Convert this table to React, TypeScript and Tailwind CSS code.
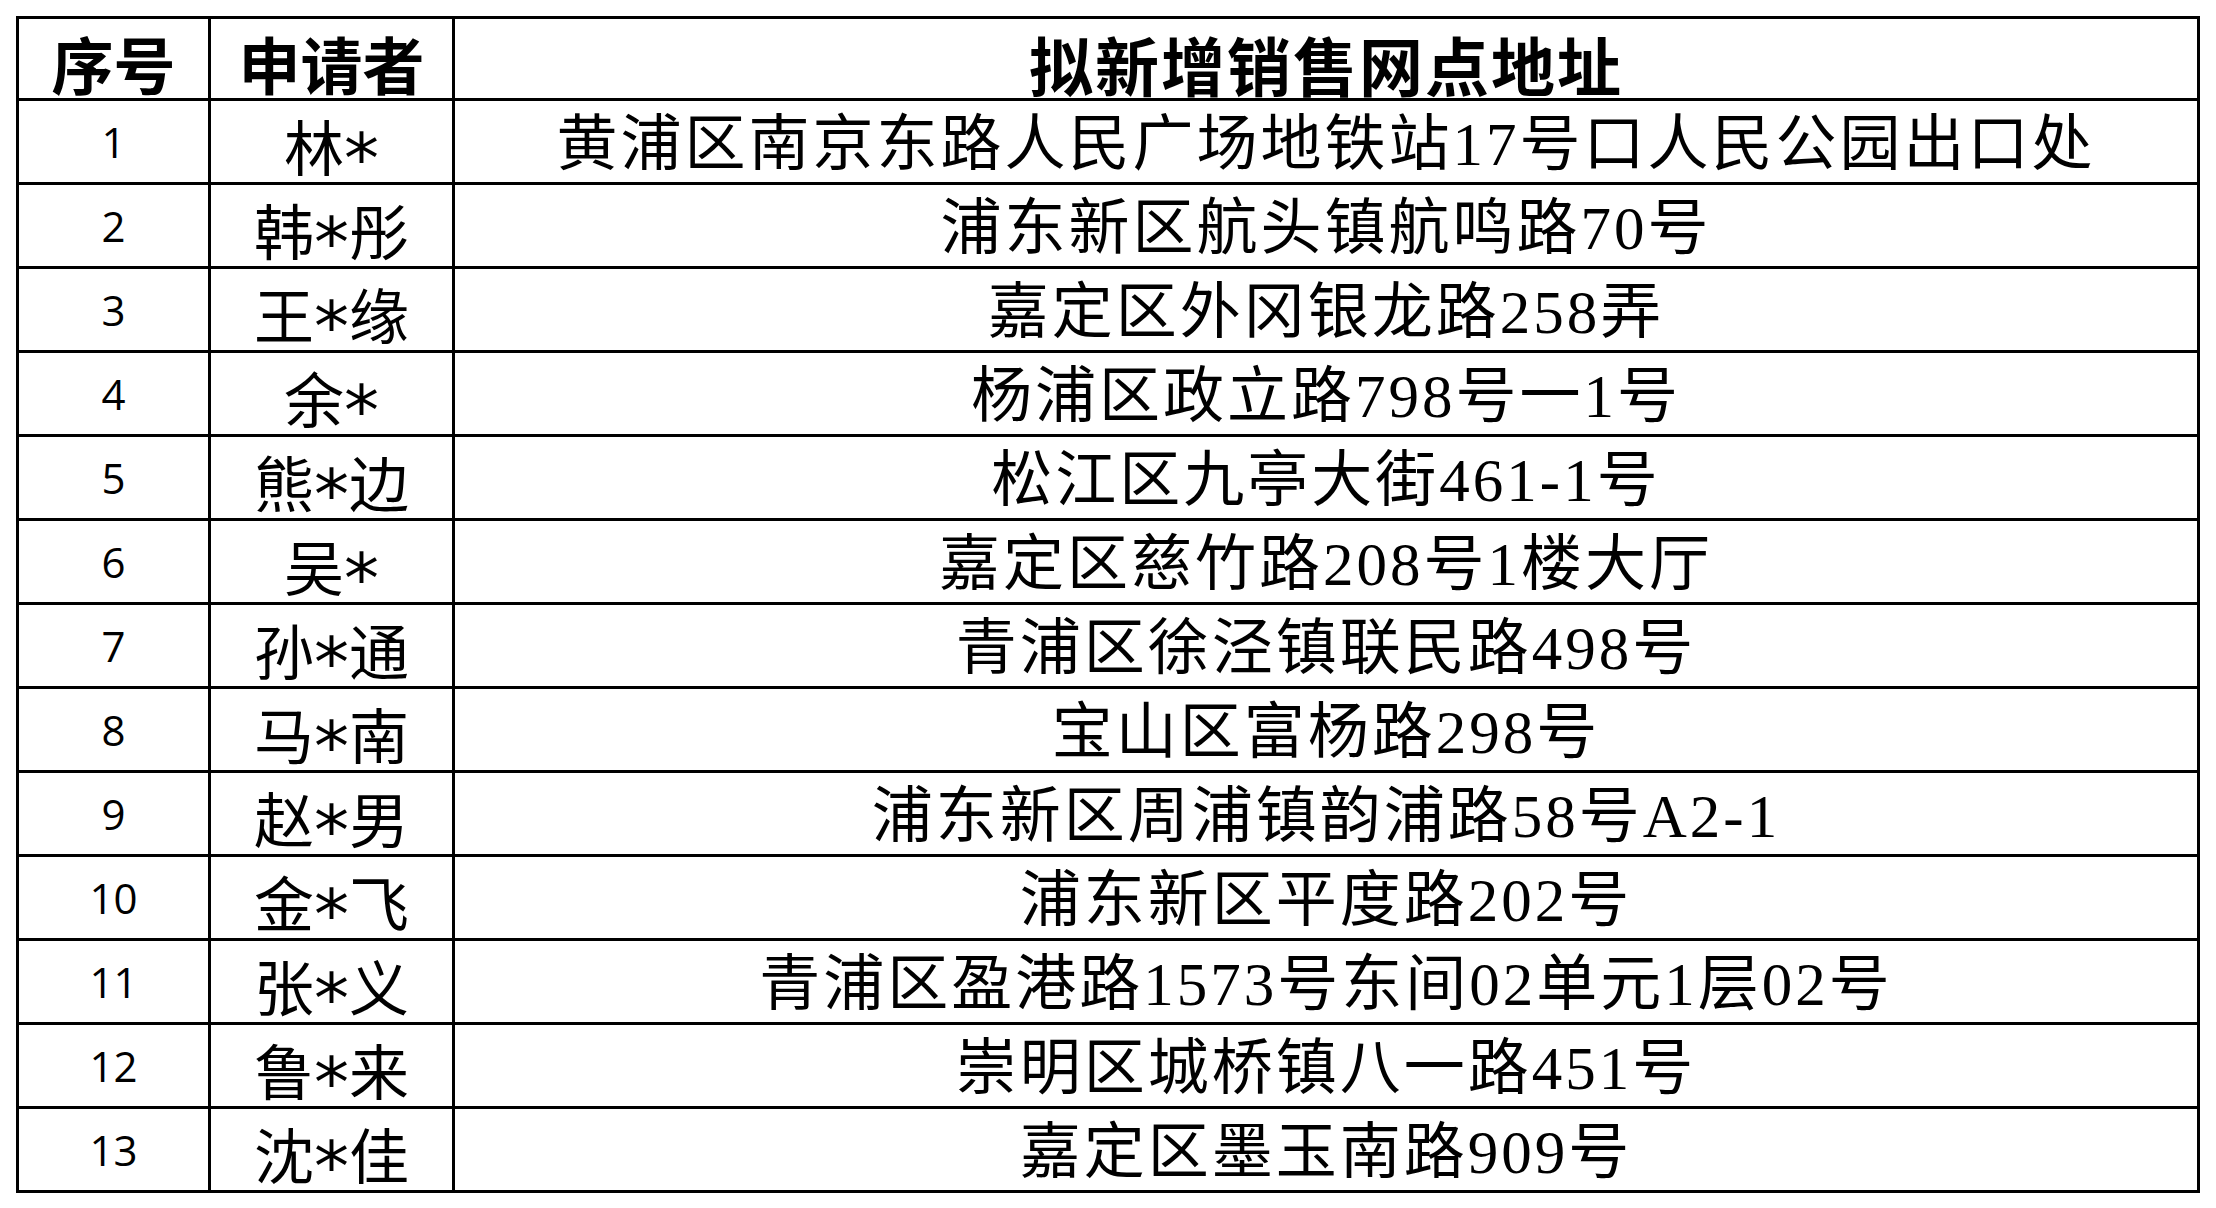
import React from "react";

const rows: [string, string, string][] = [
  ["1", "林*", "黄浦区南京东路人民广场地铁站17号口人民公园出口处"],
  ["2", "韩*彤", "浦东新区航头镇航鸣路70号"],
  ["3", "王*缘", "嘉定区外冈银龙路258弄"],
  ["4", "余*", "杨浦区政立路798号一1号"],
  ["5", "熊*边", "松江区九亭大街461-1号"],
  ["6", "吴*", "嘉定区慈竹路208号1楼大厅"],
  ["7", "孙*通", "青浦区徐泾镇联民路498号"],
  ["8", "马*南", "宝山区富杨路298号"],
  ["9", "赵*男", "浦东新区周浦镇韵浦路58号A2-1"],
  ["10", "金*飞", "浦东新区平度路202号"],
  ["11", "张*义", "青浦区盈港路1573号东间02单元1层02号"],
  ["12", "鲁*来", "崇明区城桥镇八一路451号"],
  ["13", "沈*佳", "嘉定区墨玉南路909号"],
];

function Name({ text }: { text: string }) {
  const [a, b] = text.split("*");
  return (
    <span>
      {a}
      <span className="inline-block h-[56px] translate-y-[12px] font-['DejaVu_Sans',sans-serif] text-[70px] leading-[56px]">
        *
      </span>
      {b}
    </span>
  );
}

export default function App() {
  return (
    <div className="w-[2216px] h-[1208px] bg-white pl-[16px] pt-[16px]">
      <table className="border-collapse text-black" style={{ width: 2184 }}>
        <colgroup>
          <col className="w-[192px]" />
          <col className="w-[244px]" />
          <col />
        </colgroup>
        <thead>
          <tr className="h-[82px]">
            <th className="border-[3px] border-black p-0 pt-[8px] text-[62px] font-bold leading-none font-['Noto_Sans_CJK_SC',sans-serif]">
              序号
            </th>
            <th className="border-[3px] border-black p-0 pt-[8px] text-[62px] font-bold leading-none font-['Noto_Sans_CJK_SC',sans-serif]">
              申请者
            </th>
            <th className="border-[3px] border-black p-0 pt-[8px] text-[64px] font-bold leading-none tracking-[2px] font-['Noto_Sans_CJK_SC',sans-serif]">
              拟新增销售网点地址
            </th>
          </tr>
        </thead>
        <tbody>
          {rows.map(([n, name, addr]) => (
            <tr key={n} className="h-[84px]">
              <td className="border-[3px] border-black p-0 text-center text-[42px] leading-none font-['Open_Sans',sans-serif]">
                {n}
              </td>
              <td className="border-[3px] border-black p-0 pt-[6px] text-center text-[60px] leading-none font-['Noto_Sans_CJK_SC',sans-serif]">
                <Name text={name} />
              </td>
              <td className="border-[3px] border-black p-0 pt-[6px] text-center text-[61px] leading-none tracking-[3px] font-['Liberation_Serif','Noto_Sans_CJK_SC',serif]">
                {addr}
              </td>
            </tr>
          ))}
        </tbody>
      </table>
    </div>
  );
}
